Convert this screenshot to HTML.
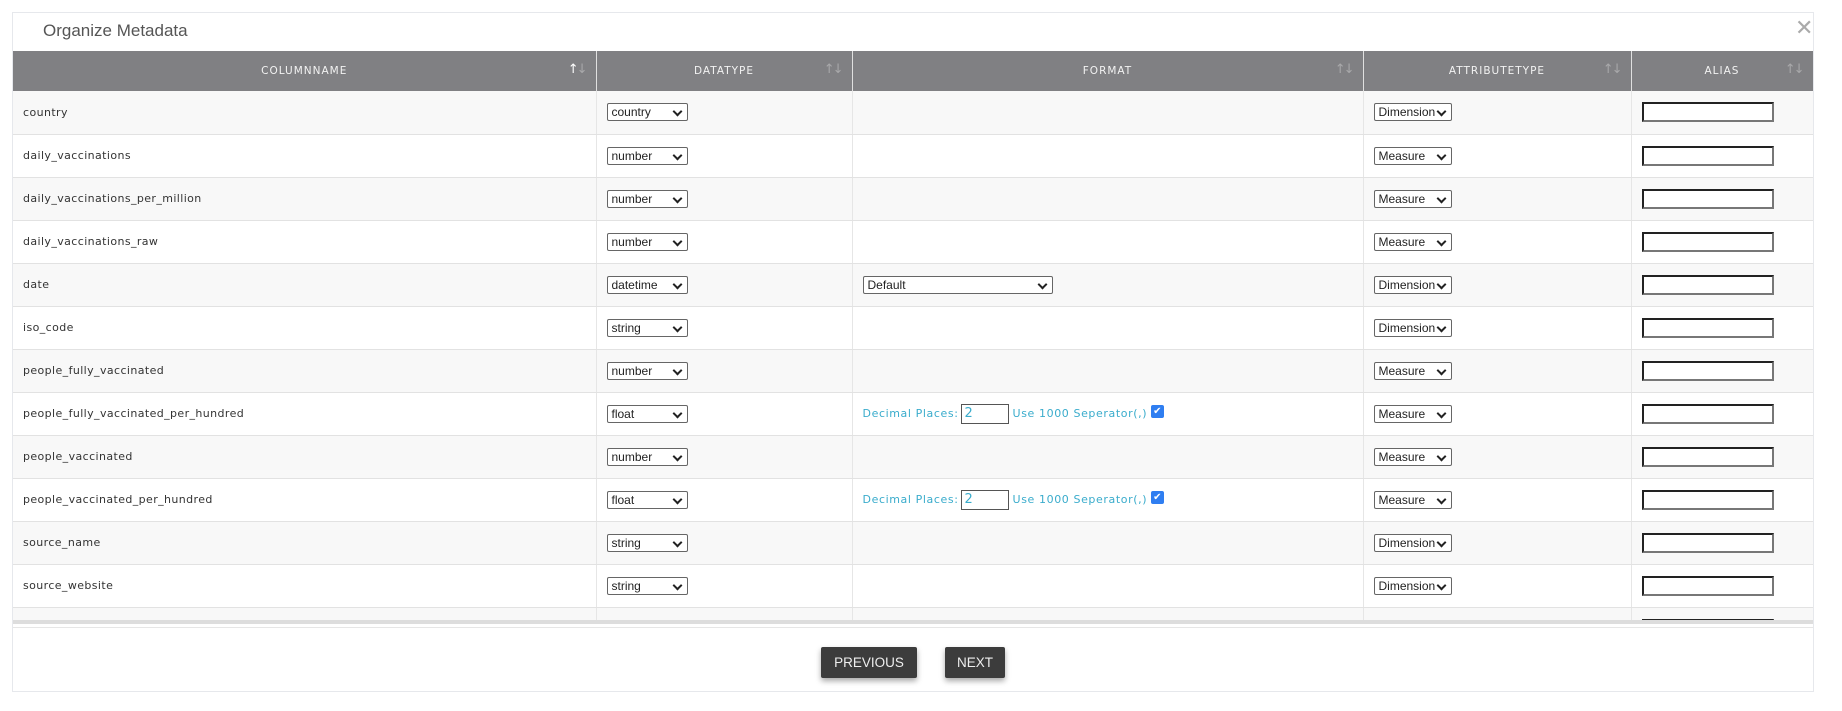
<!DOCTYPE html>
<html><head><meta charset="utf-8"><style>
*{box-sizing:border-box;margin:0;padding:0}
body{width:1842px;height:711px;background:#fff;font-family:"DejaVu Sans","Liberation Sans",sans-serif;position:relative;overflow:hidden}
.modal{position:absolute;left:12px;top:12px;width:1802px;height:680px;border:1px solid #e6e8ec;background:#fff}
.title{position:absolute;left:30px;top:8px;font-size:17px;color:#555;font-family:"Liberation Sans",sans-serif}
.close{position:absolute;left:1782px;top:3px;font-size:22px;color:#aaa;font-family:"DejaVu Sans",sans-serif;font-weight:200}
.wrap{position:absolute;left:0;top:38px;width:1800px;height:573px;overflow:hidden;border-bottom:4px solid #ddd}
table{border-collapse:collapse;table-layout:fixed;width:1800px}
th{background:#808083;color:#f2f2f2;font-size:10.5px;font-weight:400;letter-spacing:1px;height:40px;border-right:1px solid #e0e0e0;position:relative;text-align:center}
th .s{position:absolute;right:10px;top:11px;font-size:13px;color:#a8a8aa;letter-spacing:-2px;font-weight:400}
td{height:43px;border-bottom:1px solid #e2e2e2;border-right:1px solid #e6e6e6;font-size:11px;color:#333;padding-left:10px;letter-spacing:.4px}
tr:nth-child(even) td{background:#f8f8f8}
.sel{display:inline-block;height:18px;border:1px solid #666;border-radius:2px;background:#fff;font-family:"Liberation Sans",sans-serif;font-size:12px;letter-spacing:0;line-height:16px;padding-left:4px;position:relative;vertical-align:middle;color:#222}
.sel:after{content:"";position:absolute;right:6px;top:4px;width:5px;height:5px;border-right:2px solid #222;border-bottom:2px solid #222;transform:rotate(45deg)}
.dt{width:81px}.at{width:78px}.fm{width:190px}
.al{display:inline-block;width:132px;height:20px;border:2px solid #333;border-top-color:#222;border-left-color:#222;border-right-color:#777;border-bottom-color:#777;background:#fff;vertical-align:middle}
.dec{color:#3aaccc;font-size:11px;letter-spacing:.6px}
.dec .in{display:inline-block;width:48px;height:20px;border:1px solid #555;vertical-align:middle;color:#3aaccc;font-size:13px;padding-left:3px;line-height:18px;margin:0 4px 0 2px}
.cb{display:inline-block;width:13px;height:13px;background:#2f7ef1;border-radius:2px;color:#fff;font-size:10px;line-height:13px;text-align:center;vertical-align:3px;margin-left:4px}
.btn{position:absolute;top:647px;height:31px;background:#3c3c3c;color:#eee;font-family:"Liberation Sans",sans-serif;font-size:13.5px;line-height:31px;text-align:center;border-radius:2px;box-shadow:0 3px 6px rgba(0,0,0,.35)}
</style></head><body>
<div class="modal">
<div class="title">Organize Metadata</div>
<div class="close">✕</div>
<div class="wrap"><table>
<colgroup><col style="width:583px"><col style="width:256px"><col style="width:511px"><col style="width:268px"><col style="width:182px"></colgroup>
<tr><th>COLUMNNAME<span class="s" style="color:#fff">↑<span style="color:#a8a8aa">↓</span></span></th><th>DATATYPE<span class="s">↑↓</span></th><th>FORMAT<span class="s">↑↓</span></th><th>ATTRIBUTETYPE<span class="s">↑↓</span></th><th>ALIAS<span class="s">↑↓</span></th></tr>
<tr><td>country</td><td><span class="sel dt">country</span></td><td></td><td><span class="sel at">Dimension</span></td><td><span class="al"></span></td></tr>
<tr><td>daily_vaccinations</td><td><span class="sel dt">number</span></td><td></td><td><span class="sel at">Measure</span></td><td><span class="al"></span></td></tr>
<tr><td>daily_vaccinations_per_million</td><td><span class="sel dt">number</span></td><td></td><td><span class="sel at">Measure</span></td><td><span class="al"></span></td></tr>
<tr><td>daily_vaccinations_raw</td><td><span class="sel dt">number</span></td><td></td><td><span class="sel at">Measure</span></td><td><span class="al"></span></td></tr>
<tr><td>date</td><td><span class="sel dt">datetime</span></td><td><span class="sel fm">Default</span></td><td><span class="sel at">Dimension</span></td><td><span class="al"></span></td></tr>
<tr><td>iso_code</td><td><span class="sel dt">string</span></td><td></td><td><span class="sel at">Dimension</span></td><td><span class="al"></span></td></tr>
<tr><td>people_fully_vaccinated</td><td><span class="sel dt">number</span></td><td></td><td><span class="sel at">Measure</span></td><td><span class="al"></span></td></tr>
<tr><td>people_fully_vaccinated_per_hundred</td><td><span class="sel dt">float</span></td><td><span class="dec">Decimal Places:<span class="in">2</span>Use 1000 Seperator(,)<span class="cb">✔</span></span></td><td><span class="sel at">Measure</span></td><td><span class="al"></span></td></tr>
<tr><td>people_vaccinated</td><td><span class="sel dt">number</span></td><td></td><td><span class="sel at">Measure</span></td><td><span class="al"></span></td></tr>
<tr><td>people_vaccinated_per_hundred</td><td><span class="sel dt">float</span></td><td><span class="dec">Decimal Places:<span class="in">2</span>Use 1000 Seperator(,)<span class="cb">✔</span></span></td><td><span class="sel at">Measure</span></td><td><span class="al"></span></td></tr>
<tr><td>source_name</td><td><span class="sel dt">string</span></td><td></td><td><span class="sel at">Dimension</span></td><td><span class="al"></span></td></tr>
<tr><td>source_website</td><td><span class="sel dt">string</span></td><td></td><td><span class="sel at">Dimension</span></td><td><span class="al"></span></td></tr>
<tr><td>total_vaccinations</td><td><span class="sel dt">number</span></td><td></td><td><span class="sel at">Measure</span></td><td><span class="al"></span></td></tr>
</table></div>
<div style="position:absolute;left:0;top:614px;width:1800px;border-top:1px solid #e6e6e6"></div>
</div>
<div class="btn" style="left:821px;width:96px">PREVIOUS</div>
<div class="btn" style="left:945px;width:60px">NEXT</div>
</body></html>
